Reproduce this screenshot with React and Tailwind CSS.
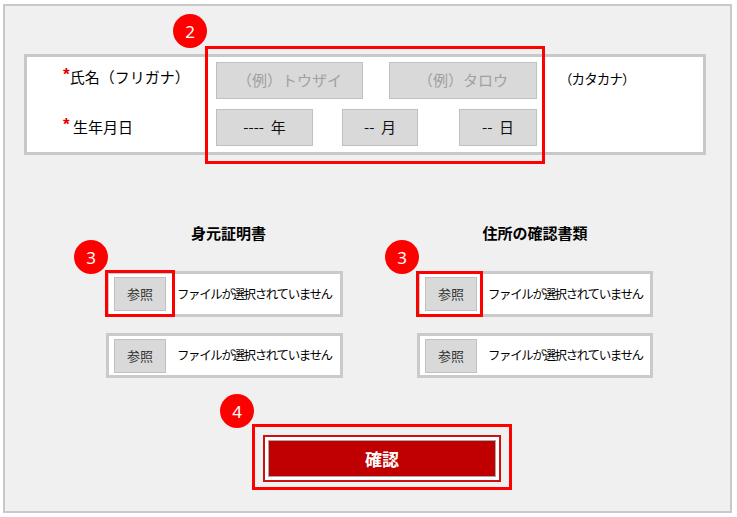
import React from "react";

const jp = { fontFamily: '"Noto Sans CJK JP", "Noto Sans", sans-serif' };

function Badge({ n, className }) {
  return (
    <div
      className={`absolute w-[34px] h-[34px] rounded-full bg-[#ff0000] text-white flex items-center justify-center text-[17px] leading-none ${className}`}
      style={{ fontFamily: '"Noto Sans", "Liberation Sans", sans-serif' }}
    >
      {n}
    </div>
  );
}

function Field({ w, children, muted }) {
  return (
    <div
      className={`h-[37px] border border-[#c0c0c0] bg-[#d9d9d9] flex items-center justify-center text-[15px] ${muted ? "text-[#a0a0a0]" : "text-[#111]"}`}
      style={{ width: w }}
    >
      {children}
    </div>
  );
}

function Star() {
  return (
    <span
      className="text-[#e00000] text-[17px] font-bold leading-none relative -top-[3px]"
      style={{ fontFamily: '"Liberation Sans", sans-serif' }}
    >
      *
    </span>
  );
}

function FileBox({ h }) {
  return (
    <div
      className="w-full border-[3px] border-[#cacaca] bg-white flex items-center pl-[5px]"
      style={{ height: h }}
    >
      <div className="w-[52px] h-[34px] border border-[#c0c0c0] bg-[#d9d9d9] flex items-center justify-center text-[13px] text-[#333]">
        参照
      </div>
      <div className="ml-[11px] text-[12.5px] tracking-[-1.4px] text-black whitespace-nowrap">
        ファイルが選択されていません
      </div>
    </div>
  );
}

export default function App() {
  return (
    <div className="w-[737px] h-[517px] bg-white pt-[4px] pl-[3px]" style={jp}>
      <div className="relative w-[729px] h-[509px] border-2 border-[#c8c8c8] bg-[#f0f0f0]">
        {/* Info box */}
        <div className="ml-[19px] mt-[48px] w-[682px] h-[101px] border-[3px] border-[#c8c8c8] bg-white pt-[5px]">
          <div className="flex items-center pl-[36px]">
            <div className="w-[153px] text-[15px] text-black -mt-[6px] whitespace-nowrap">
              <Star />氏名（フリガナ）
            </div>
            <Field w={147} muted>（例）トウザイ</Field>
            <div className="w-[26px]" />
            <Field w={148} muted>（例）タロウ</Field>
            <div className="ml-[22px] text-[13.5px] tracking-[-0.9px] text-black -mt-[4px]">（カタカナ）</div>
          </div>
          <div className="flex items-center pl-[36px] mt-[10px]">
            <div className="w-[153px] text-[15px] text-black whitespace-nowrap">
              <Star /> 生年月日
            </div>
            <Field w={97}>----&nbsp;&nbsp;年</Field>
            <div className="w-[29px]" />
            <Field w={76}>--&nbsp;&nbsp;月</Field>
            <div className="w-[41px]" />
            <Field w={78}>--&nbsp;&nbsp;日</Field>
          </div>
        </div>

        {/* Upload sections */}
        <div className="flex ml-[101px] mt-[67px] gap-[74px]">
          <div className="w-[237px] flex flex-col">
            <div className="h-[22px] leading-[22px] text-center font-bold text-[15px] text-black pl-[8px]">身元証明書</div>
            <div className="mt-[27px]">
              <FileBox h={46} />
            </div>
            <div className="mt-[16px]">
              <FileBox h={45} />
            </div>
          </div>
          <div className="w-[236px] flex flex-col">
            <div className="h-[22px] leading-[22px] text-center font-bold text-[15px] text-black">住所の確認書類</div>
            <div className="mt-[27px]">
              <FileBox h={46} />
            </div>
            <div className="mt-[16px]">
              <FileBox h={45} />
            </div>
          </div>
        </div>

        {/* Confirm button */}
        <div className="ml-[258px] mt-[57px] w-[238px] h-[47px] border-2 border-[#cc1111] bg-white p-[3px]">
          <button className="w-full h-full border border-[#a8a8a8] bg-[#c00000] text-white font-bold text-[17px] flex items-center justify-center">
            確認
          </button>
        </div>

        {/* Overlays */}
        <Badge n="2" className="left-[168px] top-[8px]" />
        <div className="absolute left-[200px] top-[40px] w-[340px] h-[118px] border-[3px] border-[#ff0000]" />

        <Badge n="3" className="left-[69px] top-[234px]" />
        <div className="absolute left-[100px] top-[264px] w-[70px] h-[47px] border-[3px] border-[#ff0000]" />

        <Badge n="3" className="left-[380px] top-[234px]" />
        <div className="absolute left-[411px] top-[265px] w-[67px] h-[46px] border-[3px] border-[#ff0000]" />

        <Badge n="4" className="left-[215px] top-[388px]" />
        <div className="absolute left-[247px] top-[418px] w-[260px] h-[66px] border-[3px] border-[#ff0000]" />
      </div>
    </div>
  );
}
